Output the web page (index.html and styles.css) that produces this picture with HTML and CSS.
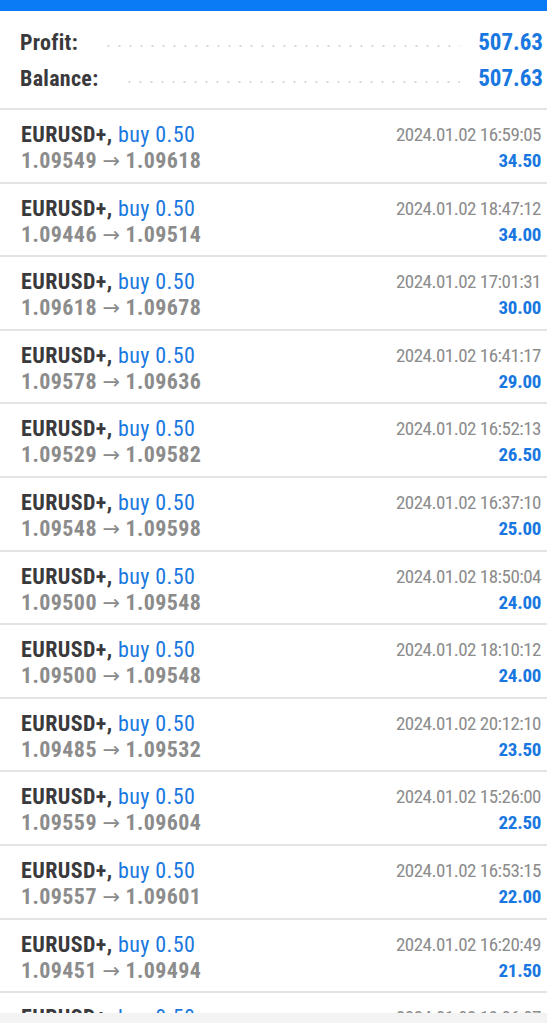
FILE: index.html
```html
<!DOCTYPE html>
<html lang="en">
<head>
  <meta charset="UTF-8">
  <meta name="viewport" content="width=device-width, initial-scale=1.0">
  <title>History</title>
  <link rel="stylesheet" href="styles.css">
</head>
<body>
  <div class="topbar"></div>

  <div class="summary">
    <div class="summary-row">
      <span class="label">Profit:</span>
      <span class="dots"></span>
      <span class="amount">507.63</span>
    </div>
    <div class="summary-row">
      <span class="label">Balance:</span>
      <span class="dots"></span>
      <span class="amount">507.63</span>
    </div>
  </div>

  <div id="dealList"></div>

  <div class="bottombar"></div>

  <script>
    const deals = [
      ["1.09549", "1.09618", "2024.01.02 16:59:05", "34.50"],
      ["1.09446", "1.09514", "2024.01.02 18:47:12", "34.00"],
      ["1.09618", "1.09678", "2024.01.02 17:01:31", "30.00"],
      ["1.09578", "1.09636", "2024.01.02 16:41:17", "29.00"],
      ["1.09529", "1.09582", "2024.01.02 16:52:13", "26.50"],
      ["1.09548", "1.09598", "2024.01.02 16:37:10", "25.00"],
      ["1.09500", "1.09548", "2024.01.02 18:50:04", "24.00"],
      ["1.09500", "1.09548", "2024.01.02 18:10:12", "24.00"],
      ["1.09485", "1.09532", "2024.01.02 20:12:10", "23.50"],
      ["1.09559", "1.09604", "2024.01.02 15:26:00", "22.50"],
      ["1.09557", "1.09601", "2024.01.02 16:53:15", "22.00"],
      ["1.09451", "1.09494", "2024.01.02 16:20:49", "21.50"],
      ["1.09470", "1.09512", "2024.01.02 19:06:07", "21.00"]
    ];

    document.getElementById("dealList").innerHTML = deals.map(d => `
      <div class="deal">
        <div class="deal-left">
          <div class="deal-name"><strong>EURUSD+,</strong> <span class="buy">buy 0.50</span></div>
          <div class="deal-price">${d[0]} <span class="arrow">→</span> ${d[1]}</div>
        </div>
        <div class="deal-right">
          <div class="deal-time">${d[2]}</div>
          <div class="deal-profit">${d[3]}</div>
        </div>
      </div>
    `).join("");
  </script>
</body>
</html>
```

FILE: styles.css
```css
body {
  margin: 0;
  background: #ffffff;
  font-family: "Roboto Condensed", Roboto, "Liberation Sans", sans-serif;
  color: #3a3a3c;
  overflow: hidden;
}
.topbar {
  height: 11px;
  background-color: #0a7bf4;
}
.summary {
  padding: 13px 4px 12px 20px;
  border-bottom: 2px solid #e4e4e4;
}
.summary-row {
  display: flex;
  align-items: center;
  height: 36px;
}
.label {
  font-size: 22px;
  font-weight: bold;
  letter-spacing: 0.3px;
}
.dots {
  flex: 1;
  margin: 8px 18px 0 25px;
  height: 2px;
  background-image: radial-gradient(circle, #d4d4d4 1px, transparent 1.2px);
  background-size: 11px 2px;
}
.amount {
  font-size: 23px;
  font-weight: bold;
  color: #1877e0;
}
.deal {
  display: flex;
  justify-content: space-between;
  height: 73.6px;
  box-sizing: border-box;
  padding: 11px 6px 0 21px;
  border-bottom: 2px solid #e4e4e4;
}
.deal-name {
  font-size: 22px;
  line-height: 27px;
  letter-spacing: 0.4px;
}
.deal-name strong {
  color: #3a3a3c;
}
.buy {
  color: #1877e0;
}
.deal-price {
  font-size: 22px;
  line-height: 26px;
  font-weight: bold;
  letter-spacing: 0.4px;
  color: #8c8c8c;
}
.arrow {
  font-family: "DejaVu Sans", sans-serif;
  font-weight: normal;
  font-size: 21px;
  letter-spacing: 0;
}
.deal-right {
  text-align: right;
}
.deal-time {
  font-size: 19px;
  line-height: 27px;
  letter-spacing: -0.5px;
  color: #8c8c8c;
}
.deal-profit {
  font-size: 19px;
  line-height: 26px;
  font-weight: bold;
  letter-spacing: -0.3px;
  color: #1877e0;
}
.bottombar {
  position: fixed;
  left: 0;
  right: 0;
  bottom: 0;
  height: 10px;
  background-color: #f3f3f3;
}
```
